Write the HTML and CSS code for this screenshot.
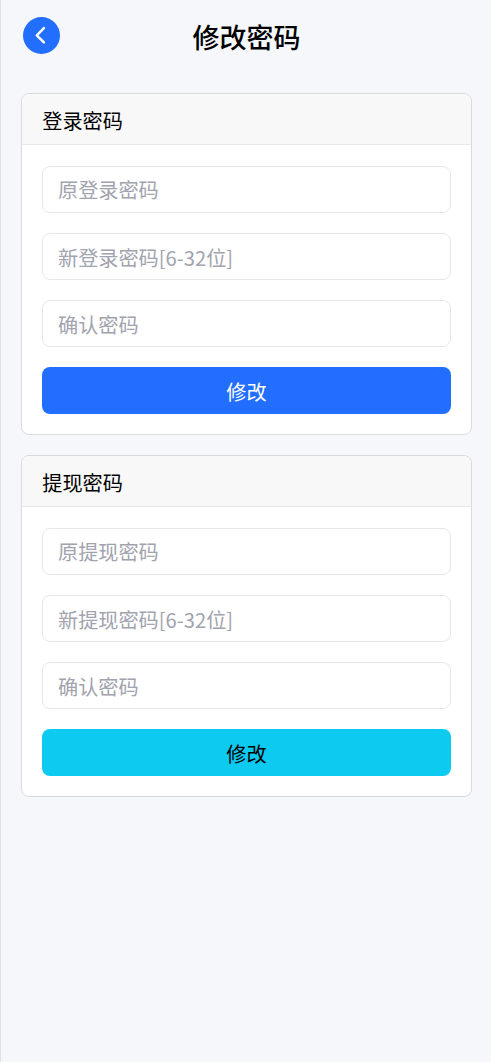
FILE: index.html
```html
<!DOCTYPE html>
<html lang="zh-CN">
<head>
<meta charset="utf-8">
<title>修改密码</title>
<link rel="stylesheet" href="styles.css">
</head>
<body>
<header class="topbar">
  <button class="back" aria-label="返回"><svg width="37" height="37" viewBox="0 0 37 37" fill="none" stroke="#fff" stroke-width="2.5" stroke-linecap="round" stroke-linejoin="round"><path d="M20.9 11.2 13.8 18.3l7.1 7.1"/></svg></button>
  <h1 class="title">修改密码</h1>
</header>
<main class="content">
  <section class="card">
    <h2 class="card-header">登录密码</h2>
    <form class="card-body">
      <input class="field" type="password" placeholder="原登录密码">
      <input class="field" type="password" placeholder="新登录密码[6-32位]">
      <input class="field" type="password" placeholder="确认密码">
      <button class="submit primary" type="button">修改</button>
    </form>
  </section>
  <section class="card">
    <h2 class="card-header">提现密码</h2>
    <form class="card-body">
      <input class="field" type="password" placeholder="原提现密码">
      <input class="field" type="password" placeholder="新提现密码[6-32位]">
      <input class="field" type="password" placeholder="确认密码">
      <button class="submit info" type="button">修改</button>
    </form>
  </section>
</main>
</body>
</html>
```
FILE: styles.css
```css
* { box-sizing: border-box; }
body {
  margin: 0;
  min-height: 1062px;
  border-left: 1px solid #e6e0e6;
  background: #f5f7fb;
  color: #000;
  font-family: "Noto Sans CJK SC", sans-serif;
  font-size: 20.16px;
}
.topbar {
  display: grid;
  grid-template-columns: 37px 1fr 37px;
  align-items: center;
  height: 73px;
  padding: 0 21px 2px 22px;
}
.back {
  width: 37px;
  height: 37px;
  padding: 0;
  border: 0;
  border-radius: 50%;
  background: #226eff;
}
.back svg { display: block; }
.title {
  margin: 0;
  padding-top: 2px;
  font-size: 27px;
  font-weight: 500;
  text-align: center;
}
.content {
  display: flex;
  flex-direction: column;
  gap: 20px;
  padding: 20px 19px 20px 20px;
}
.card {
  height: 342px;
  overflow: hidden;
  border: 1px solid #d8dadc;
  border-radius: 8px;
  background: #fff;
}
.card-header {
  height: 51px;
  margin: 0;
  padding: 0 20.3px;
  border-bottom: 1px solid #e9e9e9;
  background: #f8f8f8;
  font-size: 20.16px;
  font-weight: 400;
  line-height: 53px;
}
.card-body {
  display: flex;
  flex-direction: column;
  gap: 20.2px;
  padding: 20.6px 20px 20px;
}
.field, .submit {
  width: 100%;
  height: 47px;
  border-radius: 8px;
  font: inherit;
}
.field {
  padding: 1px 15px 0;
  border: 1px solid #e6e7e9;
  background: #fff;
}
.field + .field { padding-top: 3px; }
.field::placeholder { color: #a1a3ae; opacity: 1; }
.submit { padding: 1px 0 0; border: 0; }
.primary { background: #226eff; color: #fff; }
.info { background: #0dcaf0; color: #000; }
```
